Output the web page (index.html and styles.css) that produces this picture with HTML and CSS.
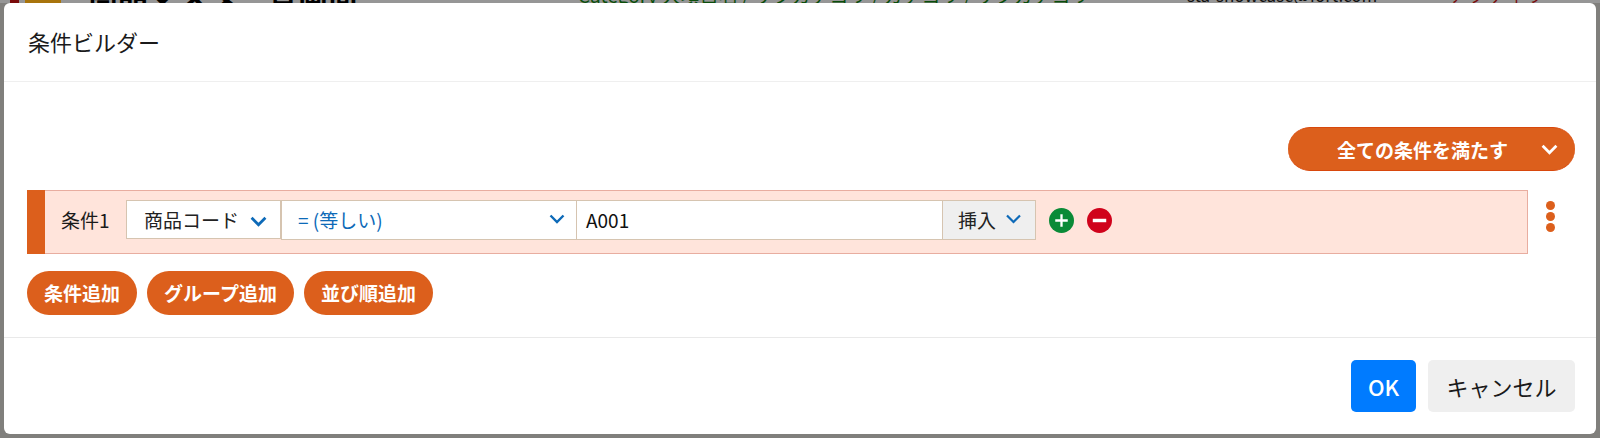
FILE: index.html
```html
<!DOCTYPE html>
<html lang="ja">
<head>
<meta charset="utf-8">
<title>条件ビルダー</title>
<link rel="stylesheet" href="styles.css">
</head>
<body>
<div class="backdrop">
  <span class="frag frag-red"></span>
  <span class="frag frag-gold"></span>
  <span class="peek peek-black">商品マスタ一覧画面</span>
  <span class="peek peek-green">Category 大項目名 / サブカテゴリ / カテゴリ / サブカテゴリ</span>
  <span class="peek peek-mail">sta-showcase@fort.com</span>
  <span class="peek peek-red">アクティブ</span>
</div>
<section class="modal">
  <header class="modal-header"><h1 class="modal-title">条件ビルダー</h1></header>
  <div class="modal-body">
    <div class="match-row">
      <button class="match-btn"><span class="match-label">全ての条件を満たす</span>
        <svg class="match-chev" viewBox="0 0 16 10" width="17" height="11"><path d="M1.5 1.5 8 8l6.5-6.5" fill="none" stroke="#fff" stroke-width="2.6"/></svg>
      </button>
    </div>
    <div class="rule-row">
      <div class="rule">
        <span class="rule-bar"></span>
        <span class="rule-label">条件1</span>
        <div class="field field-name"><span>商品コード</span>
          <svg class="chev chev-low" viewBox="0 0 16 10" width="17" height="11"><path d="M1.5 1.5 8 8l6.5-6.5" fill="none" stroke="#0d6ab8" stroke-width="2.6"/></svg>
        </div>
        <div class="field field-op"><span>= (等しい)</span>
          <svg class="chev chev-high" viewBox="0 0 16 10" width="16" height="10"><path d="M1.5 1.5 8 8l6.5-6.5" fill="none" stroke="#0d6ab8" stroke-width="2.4"/></svg>
        </div>
        <div class="field field-value">A001</div>
        <div class="field field-insert"><span>挿入</span>
          <svg class="chev chev-high" viewBox="0 0 16 10" width="17" height="10"><path d="M1.5 1.5 8 8l6.5-6.5" fill="none" stroke="#0d6ab8" stroke-width="2.2"/></svg>
        </div>
        <svg class="round-icon first" viewBox="0 0 26 26" width="25" height="25"><circle cx="13" cy="13" r="13" fill="#0a8a37"/><path d="M13 6.5v13M6.5 13h13" stroke="#fff" stroke-width="2.4"/></svg>
        <svg class="round-icon" viewBox="0 0 26 26" width="25" height="25"><circle cx="13" cy="13" r="13" fill="#d0021b"/><path d="M6 13h14" stroke="#fff" stroke-width="3.6"/></svg>
      </div>
      <div class="kebab"><i></i><i></i><i></i></div>
    </div>
    <div class="add-row">
      <button class="pill">条件追加</button>
      <button class="pill">グループ追加</button>
      <button class="pill">並び順追加</button>
    </div>
  </div>
  <footer class="modal-footer">
    <button class="btn btn-ok">OK</button>
    <button class="btn btn-cancel">キャンセル</button>
  </footer>
</section>
</body>
</html>
```

FILE: styles.css
```css
* { box-sizing: border-box; }
html, body { margin: 0; padding: 0; height: 438px; overflow: hidden; }
body {
  background: #807f7c;
  font-family: "Noto Sans CJK JP", "Noto Sans", sans-serif;
  color: #1a1a1a;
  padding: 3px 4px 4px;
}
button { font-family: inherit; border: 0; cursor: pointer; }
.backdrop { position: absolute; left: 0; top: 0; width: 1600px; height: 3px; overflow: hidden; background: #969696; }
.frag { position: absolute; top: 0; height: 3px; }
.frag-red { left: 10px; width: 9px; background: #7a0a0a; }
.frag-gold { left: 25px; width: 36px; background: #a8740c; }
.peek { position: absolute; top: -13px; font-size: 16px; line-height: 16px; white-space: nowrap; }
.peek-black { left: 88px; font-size: 30px; font-weight: 700; color: #000; }
.peek-green { left: 578px; font-size: 19px; color: #0a4d0a; }
.peek-mail { left: 1187px; font-size: 17px; color: #111; }
.peek-red { left: 1450px; color: #7a0a0a; letter-spacing: 4px; }
.modal {
  height: 431px;
  background: #fff;
  border-radius: 6px;
  display: flex;
  flex-direction: column;
}
.modal-header { height: 79px; border-bottom: 1px solid #efefef; padding: 0 23px 2px 24px; display: flex; align-items: center; }
.modal-title { margin: 0; font-size: 22px; font-weight: 400; line-height: 1; color: #1a1a1a; }
.modal-body { flex: 1; padding: 45px 21px 0 23px; }
.match-row { display: flex; justify-content: flex-end; }
.match-btn {
  width: 287px; height: 44px; border-radius: 22px; background: #dc5f1c;
  color: #fff; font-size: 19px; font-weight: 700;
  display: flex; align-items: center; padding: 0 17px 0 49px; justify-content: space-between;
  border-bottom: 1px solid #d8480c;
  border-top: 1px solid #d8480c;
}
.rule-row { display: flex; margin-top: 19px; }
.rule {
  width: 1501px; height: 64px; background: #ffe4db;
  border: 1px solid #e8ada0; border-left: 0;
  display: flex; align-items: center; padding-bottom: 5px;
}
.rule-bar { flex: none; align-self: stretch; width: 18px; margin: -1px 0 -6px; background: #dc5f1c; }
.rule-label { font-size: 19px; width: 81px; padding-left: 16px; flex: none; white-space: nowrap; }
.field {
  height: 40px; background: #fff; border: 1px solid #d6c4b0; display: flex; align-items: center;
  font-size: 19px; flex: none;
}
.field-name { width: 155px; height: 39px; padding: 0 13px 0 17px; justify-content: space-between; color: #222; white-space: nowrap; }
.field-op { width: 296px; padding: 0 11px 0 16px; justify-content: space-between; color: #0d6ab8; }
.field-value { width: 366px; padding-left: 9px; color: #111; border-left: 0; }
.field-insert { width: 94px; background: #efefef; padding: 0 13px 0 15px; justify-content: space-between; color: #222; margin-left: -1px; }
.chev-low { margin-top: 3px; }
.chev-high { margin-bottom: 2px; }
.round-icon { flex: none; margin-left: 13px; display: block; margin-top: 1px; }
.kebab { margin-left: 18px; padding-top: 11px; display: flex; flex-direction: column; gap: 2px; }
.kebab i { display: block; width: 9px; height: 9px; border-radius: 50%; background: #dc5f1c; }
.add-row { display: flex; gap: 10px; margin-top: 17px; }
.pill {
  height: 44px; border-radius: 22px; background: #dc5f1c; color: #fff; font-size: 19px; font-weight: 700; padding: 0 17px 2px; white-space: nowrap;
}
.modal-footer {
  height: 97px; border-top: 1px solid #e9e9e9; display: flex; justify-content: flex-end; align-items: flex-start;
  padding: 22px 21px 0 0; gap: 12px;
}
.btn { height: 52px; border-radius: 5px; font-size: 22px; }
.btn-ok { width: 65px; background: #007bff; color: #fff; font-weight: 500; }
.btn-cancel { width: 147px; background: #efefef; color: #1a1a1a; }
```
